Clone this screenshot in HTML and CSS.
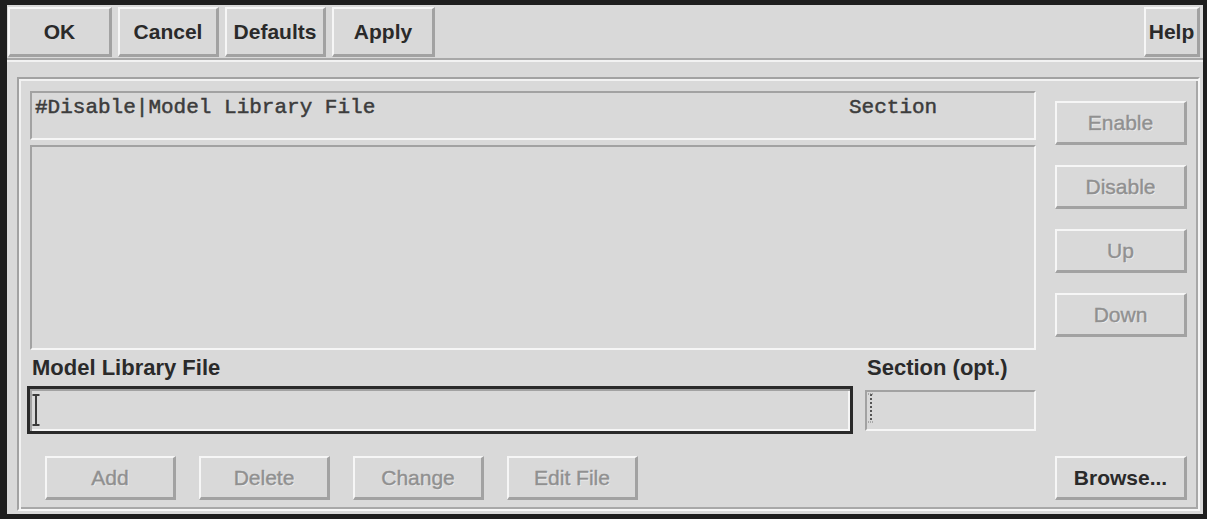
FILE: index.html
```html
<!DOCTYPE html>
<html>
 <head>
  <title>Model Library Setup</title>
  <link rel="stylesheet" href="styles.css">
 </head>
 <body>
  <div class="window">
   <div class="toolbar">
    <button class="btn btn-ok">OK</button>
    <button class="btn btn-cancel">Cancel</button>
    <button class="btn btn-defaults">Defaults</button>
    <button class="btn btn-apply">Apply</button>
    <button class="btn btn-help">Help</button>
   </div>
   <div class="separator"></div>
   <div class="panel">
    <div class="groove">
     <div class="top">
      <div class="main">
       <div class="list-header">
        <span class="col-file">#Disable|Model Library File</span>
        <span class="col-section">Section</span>
       </div>
       <div class="list"></div>
       <div class="fields">
        <div class="field-group group-file">
         <label class="field-label">Model Library File</label>
         <div class="field field-focus">
          <svg class="ibeam" width="8" height="32" viewBox="0 0 8 32">
           <path d="M0.5 1h7M4 1v30M0.5 31h7" stroke="#3a3a3a" stroke-width="2" fill="none"/>
          </svg>
         </div>
        </div>
        <div class="field-group group-section">
         <label class="field-label">Section (opt.)</label>
         <div class="field field-small">
          <svg class="ibeam-dim" width="6" height="30" viewBox="0 0 6 30">
           <path d="M3 1v28" stroke="#555" stroke-width="2" stroke-dasharray="2 2" fill="none"/>
           <path d="M0 1h5M0 29h5" stroke="#777" stroke-width="1" stroke-dasharray="1 1" fill="none"/>
          </svg>
         </div>
        </div>
       </div>
      </div>
      <div class="side">
       <button class="btn btn-side disabled">Enable</button>
       <button class="btn btn-side disabled">Disable</button>
       <button class="btn btn-side disabled">Up</button>
       <button class="btn btn-side disabled">Down</button>
      </div>
     </div>
     <div class="bottom">
      <button class="btn btn-low disabled">Add</button>
      <button class="btn btn-low disabled">Delete</button>
      <button class="btn btn-low disabled">Change</button>
      <button class="btn btn-low disabled">Edit File</button>
      <button class="btn btn-low btn-browse">Browse...</button>
     </div>
    </div>
   </div>
  </div>
 </body>
</html>
```

FILE: styles.css
```css
body {
    margin: 0;
    background-color: #1e1e1e;
    padding: 5px 4px 5px 7px;
    font-family: 'Liberation Sans', Arial, sans-serif;
}

.window {
    background-color: #d9d9d9;
    height: 509px;
    display: flex;
    flex-direction: column;
    box-sizing: border-box;
}

/* raised motif style button */
.btn {
    font-family: 'Liberation Sans', Arial, sans-serif;
    font-size: 21px;
    font-weight: bold;
    color: #2a2a2a;
    background-color: #d9d9d9;
    border-style: solid;
    border-width: 2px 3px 3px 2px;
    border-color: #f6f6f6 #a2a2a2 #a2a2a2 #f6f6f6;
    padding: 0;
    margin: 0;
    box-sizing: border-box;
    display: flex;
    align-items: center;
    justify-content: center;
}

.btn.disabled {
    color: #909090;
    font-weight: normal;
    -webkit-text-stroke: 0.4px #909090;
    text-shadow: 1px 1px 0 #ececec;
}

.toolbar {
    display: flex;
    gap: 6px;
    padding: 2px 3px 0 1px;
}

.toolbar .btn {
    height: 50px;
}

.btn-ok { width: 104px; }
.btn-cancel { width: 101px; }
.btn-defaults { width: 101px; }
.btn-apply { width: 103px; }

.btn-help {
    width: 56px;
    margin-left: auto;
}

.separator {
    margin-top: 1px;
    border-top: 2px solid #a8a8a8;
    border-bottom: 2px solid #f2f2f2;
}

.panel {
    flex: 1;
    padding: 15px 3px 3px 10px;
    display: flex;
    flex-direction: column;
}

.groove {
    flex: 1;
    border: 2px solid;
    border-color: #a2a2a2 #f6f6f6 #f6f6f6 #a2a2a2;
    box-shadow: inset 2px 2px 0 #f2f2f2, inset -2px -2px 0 #a8a8a8;
    padding: 12px 11px 9px 11px;
    display: flex;
    flex-direction: column;
}

.top {
    display: flex;
}

.main {
    width: 1006px;
    display: flex;
    flex-direction: column;
}

.list-header {
    height: 49px;
    box-sizing: border-box;
    border: 2px solid;
    border-color: #a2a2a2 #f6f6f6 #f6f6f6 #a2a2a2;
    padding: 3px 0 0 3px;
    display: flex;
    font-family: 'Liberation Mono', 'Courier New', monospace;
    font-size: 21px;
    line-height: 24px;
    color: #3c3c3c;
    -webkit-text-stroke: 0.5px #3c3c3c;
    white-space: pre;
}

.col-file {
    width: 814px;
}

.list {
    margin-top: 5px;
    height: 205px;
    box-sizing: border-box;
    border: 2px solid;
    border-color: #a2a2a2 #f6f6f6 #f6f6f6 #a2a2a2;
}

.fields {
    display: flex;
}

.field-group {
    display: flex;
    flex-direction: column;
}

.field-label {
    font-size: 22px;
    font-weight: bold;
    line-height: 26px;
    color: #2a2a2a;
    margin-top: 5px;
    white-space: nowrap;
}

.group-file {
    margin-left: -3px;
    width: 826px;
}

.group-file .field-label {
    padding-left: 5px;
}

.group-section {
    margin-left: 12px;
    width: 171px;
}

.group-section .field-label {
    padding-left: 2px;
}

.field {
    box-sizing: border-box;
    border: 2px solid;
    border-color: #a2a2a2 #f6f6f6 #f6f6f6 #a2a2a2;
    display: flex;
    align-items: center;
}

.field-focus {
    margin-top: 5px;
    height: 48px;
    border-width: 3px;
    border-color: #2a2a2a;
    box-shadow: inset 2px 2px 0 #a2a2a2, inset -2px -2px 0 #f6f6f6;
    padding-left: 2px;
}

.field-small {
    margin-top: 9px;
    height: 41px;
    padding-left: 1px;
}

.ibeam {
    display: block;
}

.ibeam-dim {
    display: block;
    margin-top: -6px;
}

.side {
    margin-left: 19px;
    padding-top: 10px;
    display: flex;
    flex-direction: column;
    gap: 20px;
}

.btn-side {
    width: 132px;
    height: 44px;
}

.bottom {
    margin-top: 22px;
    padding-left: 15px;
    display: flex;
    gap: 23px;
}

.btn-low {
    width: 131px;
    height: 44px;
}

.btn-browse {
    margin-left: auto;
    width: 132px;
}
```
